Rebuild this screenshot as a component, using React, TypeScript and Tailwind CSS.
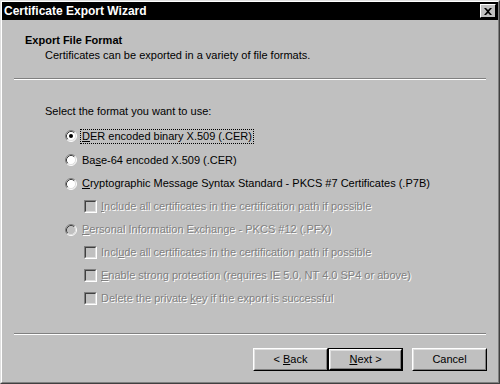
import React from "react";

const FONT = { fontFamily: '"Liberation Sans", Arial, sans-serif' };

function Radio({ checked, disabled }: { checked?: boolean; disabled?: boolean }) {
  return (
    <svg width="12" height="12" viewBox="0 0 12 12" className="shrink-0">
      <circle cx="6" cy="6" r="5" fill={disabled ? "#c0c0c0" : "#ffffff"} />
      <path d="M2.11 9.89 A5.5 5.5 0 0 1 9.89 2.11" stroke="#808080" strokeWidth="1" fill="none" />
      <path d="M9.89 2.11 A5.5 5.5 0 0 1 2.11 9.89" stroke="#ffffff" strokeWidth="1" fill="none" />
      <path d="M2.82 9.18 A4.5 4.5 0 0 1 9.18 2.82" stroke="#404040" strokeWidth="1" fill="none" />
      <path d="M9.18 2.82 A4.5 4.5 0 0 1 2.82 9.18" stroke="#dfdfdf" strokeWidth="1" fill="none" />
      {checked && <circle cx="6" cy="6" r="2" fill={disabled ? "#808080" : "#000000"} />}
    </svg>
  );
}

function Check() {
  return (
    <div className="w-[13px] h-[13px] shrink-0 border border-t-[#808080] border-l-[#808080] border-r-white border-b-white">
      <div className="w-full h-full bg-[#c0c0c0] border border-t-[#404040] border-l-[#404040] border-r-[#dfdfdf] border-b-[#dfdfdf]" />
    </div>
  );
}

const dis = "text-[#808080] [text-shadow:1px_1px_0_#ffffff]";

function Btn({ children, def }: { children: React.ReactNode; def?: boolean }) {
  return (
    <div className={`w-[75px] h-[23px] ${def ? "border border-black" : ""}`}>
      <div className="w-full h-full border border-t-white border-l-white border-r-[#000] border-b-[#000]">
        <div className="w-full h-full border border-t-[#dfdfdf] border-l-[#dfdfdf] border-r-[#808080] border-b-[#808080] flex items-center justify-center text-[11px] text-black">
          <span className="whitespace-pre">{children}</span>
        </div>
      </div>
    </div>
  );
}

export default function App() {
  return (
    <div style={FONT} className="w-[500px] h-[384px] bg-[#c0c0c0] border border-t-[#dfdfdf] border-l-[#dfdfdf] border-r-[#404040] border-b-[#404040] text-[11px] text-black overflow-hidden">
      <div className="w-full h-full border border-t-white border-l-white border-r-[#808080] border-b-[#808080] flex flex-col">
        {/* title bar */}
        <div className="h-[18px] bg-black flex items-center justify-between pl-[2px] pr-[2px]">
          <span className="text-white font-bold text-[12px] leading-none">Certificate Export Wizard</span>
          <div className="w-[16px] h-[14px] bg-[#c0c0c0] border border-t-white border-l-white border-r-black border-b-black flex items-center justify-center">
            <svg width="8" height="7" viewBox="0 0 8 7">
              <path d="M0 0 L2 0 L4 2 L6 0 L8 0 L5 3.5 L8 7 L6 7 L4 5 L2 7 L0 7 L3 3.5 Z" fill="#000" />
            </svg>
          </div>
        </div>
        {/* header */}
        <div className="h-[58px] flex flex-col pl-[23px] pt-[13px]">
          <div className="font-bold h-[15px] leading-[15px]">Export File Format</div>
          <div className="pl-[20px] h-[15px] leading-[15px]">Certificates can be exported in a variety of file formats.</div>
        </div>
        <div className="mx-[12px] h-[2px] border-t border-t-[#808080] border-b border-b-white" />
        {/* body */}
        <div className="flex flex-col pl-[43px] pt-[22px] h-[253px]">
          <div className="h-[18px] leading-[18px]">Select the format you want to use:</div>
          <div className="flex flex-col pl-[20px] pt-[4px]">
            <div className="h-[24px] flex items-center gap-[4px]">
              <Radio checked />
              <span className="outline-1 outline-dotted outline-black px-[1px] leading-[13px]">
                <u>D</u>ER encoded binary X.509 (.CER)
              </span>
            </div>
            <div className="h-[24px] flex items-center gap-[5px]">
              <Radio />
              <span>Ba<u>s</u>e-64 encoded X.509 (.CER)</span>
            </div>
            <div className="h-[23px] flex items-center gap-[5px]">
              <Radio />
              <span><u>C</u>ryptographic Message Syntax Standard - PKCS #7 Certificates (.P7B)</span>
            </div>
            <div className="h-[23px] flex items-center gap-[4px] pl-[19px]">
              <Check />
              <span className={dis}><u>I</u>nclude all certificates in the certification path if possible</span>
            </div>
            <div className="h-[23px] flex items-center gap-[5px]">
              <Radio disabled />
              <span className={dis}><u>P</u>ersonal Information Exchange - PKCS #12 (.PFX)</span>
            </div>
            <div className="h-[23px] flex items-center gap-[4px] pl-[19px]">
              <Check />
              <span className={dis}>Incl<u>u</u>de all certificates in the certification path if possible</span>
            </div>
            <div className="h-[23px] flex items-center gap-[4px] pl-[19px]">
              <Check />
              <span className={dis}><u>E</u>nable strong protection (requires IE 5.0, NT 4.0 SP4 or above)</span>
            </div>
            <div className="h-[23px] flex items-center gap-[4px] pl-[19px]">
              <Check />
              <span className={dis}>Delete the private <u>k</u>ey if the export is successful</span>
            </div>
          </div>
        </div>
        <div className="mx-[12px] h-[2px] border-t border-t-[#808080] border-b border-b-white" />
        {/* buttons */}
        <div className="flex pl-[251px] pt-[13px]">
          <Btn>{"< "}<u>B</u>ack</Btn>
          <Btn def><u>N</u>ext{" >"}</Btn>
          <div className="w-[9px]" />
          <Btn>Cancel</Btn>
        </div>
      </div>
    </div>
  );
}
